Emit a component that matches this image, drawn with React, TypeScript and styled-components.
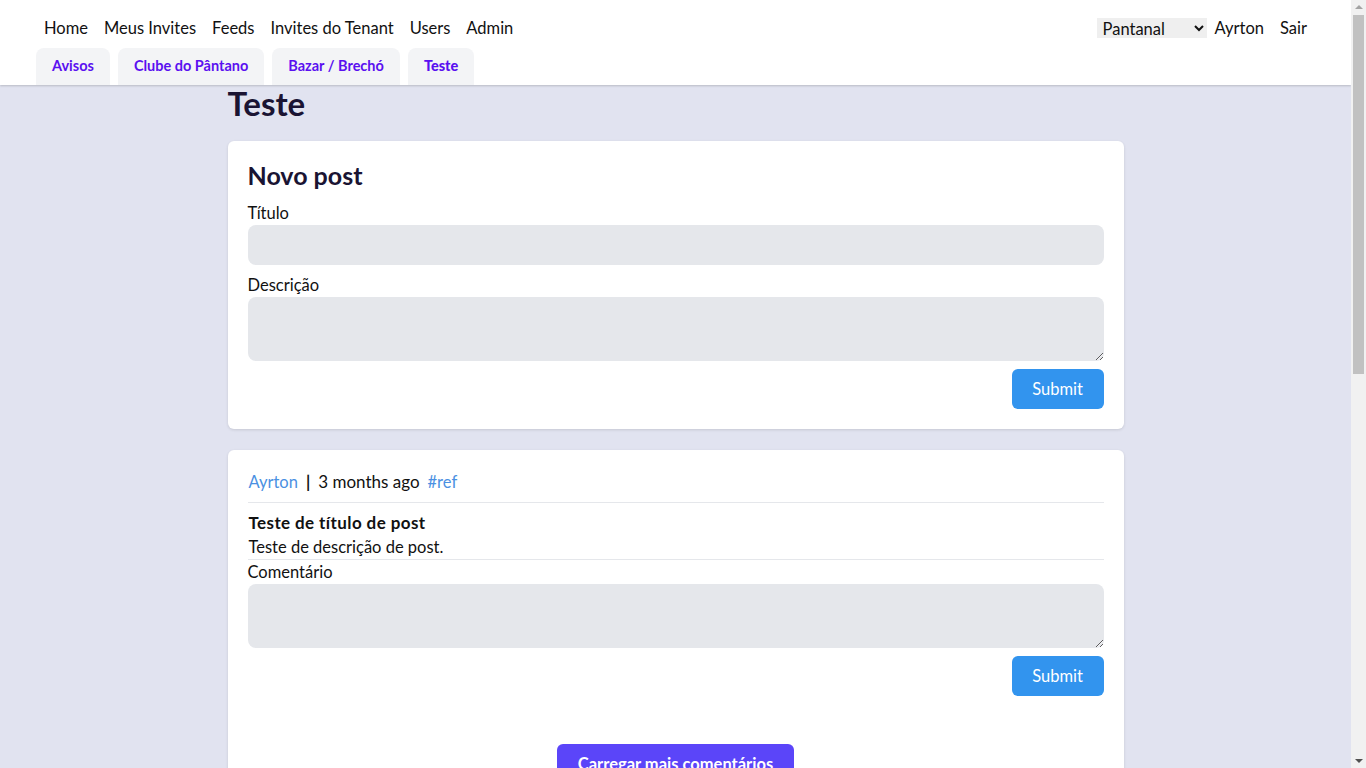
import React from "react";
import styled, { createGlobalStyle } from "styled-components";

const GlobalStyle = createGlobalStyle`
  html, body {
    margin: 0;
    padding: 0;
  }
  body {
    margin-right: 15px;
    font-family: Lato, "Open Sans", sans-serif;
    font-size: 16.5px;
    line-height: 24px;
    color: #111;
    background: #e1e3f0;
  }
  * {
    box-sizing: border-box;
  }
`;

// the page is scrolled in the reference; its scrollbar is drawn over the right edge
const ScrollTrack = styled.div`
  position: fixed;
  top: 0;
  right: 0;
  width: 15px;
  height: 100vh;
  background: #f1f1f1;
  z-index: 10;
`;

const ScrollThumb = styled.div`
  position: absolute;
  top: 15px;
  left: 2px;
  width: 11px;
  height: 359px;
  background: #c1c1c1;
`;

const ScrollArrow = styled.div<{ $down?: boolean }>`
  position: absolute;
  left: 4px;
  ${(p) => (p.$down ? "bottom: 5px;" : "top: 5px;")}
  width: 0;
  height: 0;
  border-left: 4px solid transparent;
  border-right: 4px solid transparent;
  ${(p) =>
    p.$down
      ? "border-top: 4px solid #505050;"
      : "border-bottom: 4px solid #a3a3a3;"}
`;

const Nav = styled.nav`
  background: #fff;
  padding: 16px 36px 0;
  box-shadow: 0 1px 2px rgba(0, 0, 0, 0.18);
  position: relative;
  z-index: 1;
`;

const TopRow = styled.div`
  display: flex;
  align-items: center;
  justify-content: space-between;
  height: 24px;
`;

const LinkGroup = styled.div`
  display: flex;
  align-items: center;
`;

const NavLink = styled.a`
  padding: 0 8px;
  color: #111;
  text-decoration: none;
  cursor: pointer;
`;

const TenantSelect = styled.select`
  width: 110px;
  height: 20px;
  border: none;
  background: #efefef;
  font-family: inherit;
  font-size: 16.5px;
  color: #111;
  padding: 0 2px;
`;

const TabRow = styled.div`
  display: flex;
  gap: 8px;
  margin-top: 8px;
`;

const Tab = styled.a<{ $active?: boolean }>`
  display: flex;
  align-items: center;
  height: 37px;
  padding: 0 16px 1px;
  background: #f3f4f6;
  border-radius: 8px 8px 0 0;
  color: #5a10f0;
  font-size: 14.5px;
  font-weight: ${(p) => (p.$active ? 900 : 700)};
  text-decoration: none;
`;

const Main = styled.main`
  max-width: 896px;
  margin: 0 auto;
  padding-bottom: 760px;
`;

const PageTitle = styled.h1`
  margin: 0 0 20px;
  font-size: 33px;
  line-height: 36px;
  font-weight: 700;
  color: #1a1433;
`;

const Card = styled.section`
  background: #fff;
  border-radius: 6px;
  box-shadow: 0 1px 3px rgba(0, 0, 0, 0.12);
  padding: 20px;
  margin-bottom: 21px;
  display: flex;
  flex-direction: column;
`;

const CardTitle = styled.h2`
  margin: 0 0 12px;
  font-size: 25px;
  line-height: 28px;
  font-weight: 700;
  color: #1a1433;
`;

const Label = styled.label<{ $spaced?: boolean }>`
  display: block;
  margin-top: ${(p) => (p.$spaced ? "8px" : "0")};
`;

const Input = styled.input`
  display: block;
  width: 100%;
  height: 40px;
  border: none;
  border-radius: 8px;
  background: #e5e7eb;
  font: inherit;
`;

const TextArea = styled.textarea`
  display: block;
  width: 100%;
  height: 64px;
  border: none;
  border-radius: 8px;
  background: #e5e7eb;
  font: inherit;
  resize: vertical;
`;

const Actions = styled.div`
  display: flex;
  justify-content: flex-end;
  margin-top: 8px;
`;

const SubmitButton = styled.button`
  width: 92px;
  height: 40px;
  border: none;
  border-radius: 6px;
  background: #3294ee;
  color: #fff;
  font-family: inherit;
  font-size: 16.5px;
`;

const Meta = styled.div`
  display: flex;
  align-items: center;
  padding: 0 0 8px 1px;
  border-bottom: 1px solid #e5e7eb;
`;

const MetaLink = styled.a`
  color: #4a90e2;
  text-decoration: none;
`;

const Pipe = styled.span`
  margin: 0 8px;
  font-weight: 700;
`;

const Time = styled.span`
  margin-right: 8px;
  font-size: 17px;
`;

const PostBody = styled.div`
  padding: 8px 0 0 1px;
  border-bottom: 1px solid #e5e7eb;
`;

const PostTitle = styled.div`
  font-weight: 700;
  font-size: 17px;
  letter-spacing: 0.4px;
`;

const LoadMore = styled.div`
  display: flex;
  justify-content: center;
  margin-top: 48px;
`;

const LoadMoreButton = styled.button`
  height: 40px;
  padding: 0 21px;
  border: none;
  border-radius: 6px;
  background: #5b45f9;
  color: #fff;
  font-family: inherit;
  font-size: 16.5px;
  font-weight: 700;
`;

const tabs = ["Avisos", "Clube do Pântano", "Bazar / Brechó", "Teste"];

export default function App() {
  return (
    <>
      <GlobalStyle />
      <Nav>
        <TopRow>
          <LinkGroup>
            <NavLink>Home</NavLink>
            <NavLink>Meus Invites</NavLink>
            <NavLink>Feeds</NavLink>
            <NavLink>Invites do Tenant</NavLink>
            <NavLink>Users</NavLink>
            <NavLink>Admin</NavLink>
          </LinkGroup>
          <LinkGroup>
            <TenantSelect defaultValue="pantanal">
              <option value="pantanal">Pantanal</option>
            </TenantSelect>
            <NavLink>Ayrton</NavLink>
            <NavLink>Sair</NavLink>
          </LinkGroup>
        </TopRow>
        <TabRow>
          {tabs.map((t) => (
            <Tab key={t} $active={t === "Teste"}>
              {t}
            </Tab>
          ))}
        </TabRow>
      </Nav>
      <Main>
        <PageTitle>Teste</PageTitle>
        <Card>
          <CardTitle>Novo post</CardTitle>
          <Label>Título</Label>
          <Input />
          <Label $spaced>Descrição</Label>
          <TextArea />
          <Actions>
            <SubmitButton>Submit</SubmitButton>
          </Actions>
        </Card>
        <Card>
          <Meta>
            <MetaLink>Ayrton</MetaLink>
            <Pipe>|</Pipe>
            <Time>3 months ago</Time>
            <MetaLink>#ref</MetaLink>
          </Meta>
          <PostBody>
            <PostTitle>Teste de título de post</PostTitle>
            <div>Teste de descrição de post.</div>
          </PostBody>
          <Label>Comentário</Label>
          <TextArea />
          <Actions>
            <SubmitButton>Submit</SubmitButton>
          </Actions>
          <LoadMore>
            <LoadMoreButton>Carregar mais comentários</LoadMoreButton>
          </LoadMore>
        </Card>
      </Main>
      <ScrollTrack>
        <ScrollArrow />
        <ScrollThumb />
        <ScrollArrow $down />
      </ScrollTrack>
    </>
  );
}
